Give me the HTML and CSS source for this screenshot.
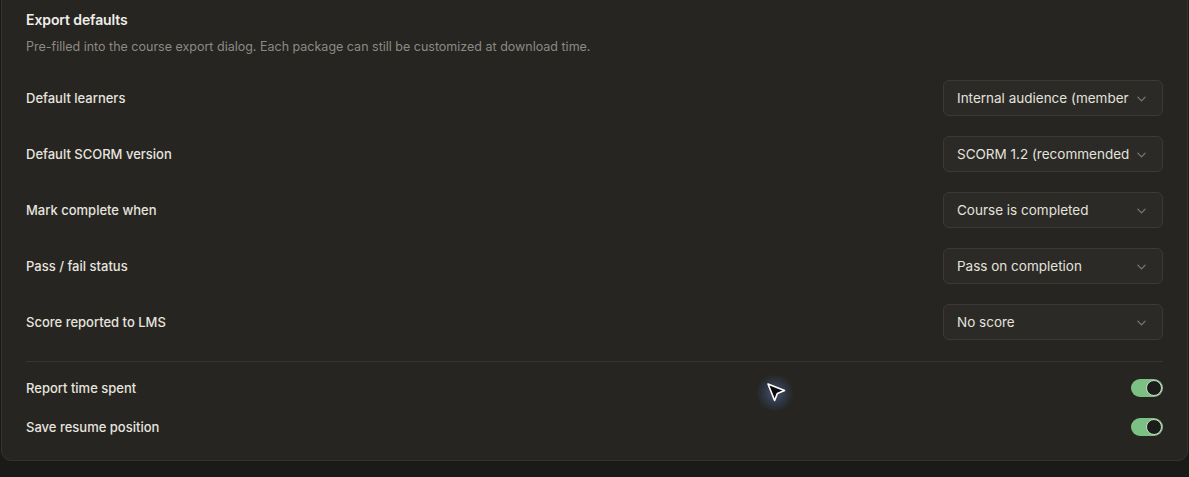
FILE: index.html
```html
<!DOCTYPE html>
<html lang="en">
<head>
<meta charset="utf-8">
<title>Export defaults</title>
<link rel="stylesheet" href="styles.css">
</head>
<body>
<section class="card">
  <h2 class="title">Export defaults</h2>
  <p class="desc">Pre-filled into the course export dialog. Each package can still be customized at download time.</p>
  <div class="rows">
    <div class="row">
      <span class="label">Default learners</span>
      <div class="select"><span class="value">Internal audience (member</span><svg class="chev" viewBox="0 0 10 6"><path d="M1 1l4 4 4-4"/></svg></div>
    </div>
    <div class="row">
      <span class="label">Default SCORM version</span>
      <div class="select"><span class="value">SCORM 1.2 (recommended</span><svg class="chev" viewBox="0 0 10 6"><path d="M1 1l4 4 4-4"/></svg></div>
    </div>
    <div class="row">
      <span class="label">Mark complete when</span>
      <div class="select"><span class="value">Course is completed</span><svg class="chev" viewBox="0 0 10 6"><path d="M1 1l4 4 4-4"/></svg></div>
    </div>
    <div class="row">
      <span class="label">Pass / fail status</span>
      <div class="select"><span class="value">Pass on completion</span><svg class="chev" viewBox="0 0 10 6"><path d="M1 1l4 4 4-4"/></svg></div>
    </div>
    <div class="row">
      <span class="label">Score reported to LMS</span>
      <div class="select"><span class="value">No score</span><svg class="chev" viewBox="0 0 10 6"><path d="M1 1l4 4 4-4"/></svg></div>
    </div>
  </div>
  <hr class="divider">
  <div class="toggles">
    <div class="trow">
      <span class="label">Report time spent</span>
      <span class="toggle on"><span class="knob"></span></span>
    </div>
    <div class="trow">
      <span class="label">Save resume position</span>
      <span class="toggle on"><span class="knob"></span></span>
    </div>
  </div>
  <div class="cursor">
    <svg viewBox="0 0 20 20"><path d="M2 2 L18.5 8.6 L11.4 11.4 L8.6 18.5 Z" fill="#0b0b0b" stroke="#ffffff" stroke-width="1.6" stroke-linejoin="round"/></svg>
  </div>
</section>
</body>
</html>
```
FILE: styles.css
```css
html, body {
  margin: 0;
  padding: 0;
  background: #1a1a18;
  height: 100%;
  overflow: hidden;
}
body {
  font-family: Inter, "Noto Sans", sans-serif;
  color: #e6e4df;
  padding: 0 1px;
}
.card {
  position: relative;
  margin-top: -10px;
  background: #262521;
  border: 1px solid #34332f;
  border-radius: 10px;
  padding: 18px 24px 14px 24px;
}
.title {
  margin: 0;
  font-size: 14px;
  font-weight: 600;
  line-height: 22px;
  color: #f0eee9;
  letter-spacing: -0.1px;
}
.desc {
  margin: 7px 0 0 0;
  font-size: 12.5px;
  line-height: 18px;
  color: #8c8a85;
}
.rows {
  margin-top: 14px;
}
.row {
  height: 56px;
  display: flex;
  align-items: center;
  justify-content: space-between;
}
.label {
  font-size: 13px;
  font-weight: 500;
  color: #e6e4df;
}
.select {
  position: relative;
  box-sizing: border-box;
  width: 220px;
  height: 36px;
  border: 1px solid #3b3a36;
  border-radius: 6px;
  background: #2b2a26;
  display: flex;
  align-items: center;
  padding: 0 36px 0 13px;
}
.value {
  white-space: nowrap;
  font-size: 13.5px;
  color: #e4e2dd;
}
.chev {
  position: absolute;
  right: 16px;
  top: 15px;
  width: 9px;
  height: 6px;
  fill: none;
  stroke: #7e7c77;
  stroke-width: 1.3;
  stroke-linecap: round;
  stroke-linejoin: round;
}
.divider {
  border: 0;
  border-top: 1px solid #36352f;
  margin: 11px 0 0 0;
}
.toggles {
  padding-top: 6px;
}
.trow {
  height: 39px;
  display: flex;
  align-items: center;
  justify-content: space-between;
}
.toggle {
  position: relative;
  width: 32px;
  height: 18px;
  border-radius: 9px;
  background: #7cc184;
  display: inline-block;
}
.knob {
  position: absolute;
  right: 1px;
  top: 1px;
  width: 14px;
  height: 14px;
  border-radius: 50%;
  background: #1c1c1a;
  border: 1px solid #cfd8cf;
}
.cursor {
  position: absolute;
  left: 754px;
  top: 383px;
  width: 38px;
  height: 38px;
  box-sizing: border-box;
  padding: 8px 0 0 10px;
  border-radius: 50%;
  background: radial-gradient(circle, rgba(110,150,220,0.4) 0%, rgba(80,120,200,0.18) 45%, rgba(60,90,160,0) 70%);
}
.cursor svg {
  display: block;
  width: 20px;
  height: 20px;
}
```
